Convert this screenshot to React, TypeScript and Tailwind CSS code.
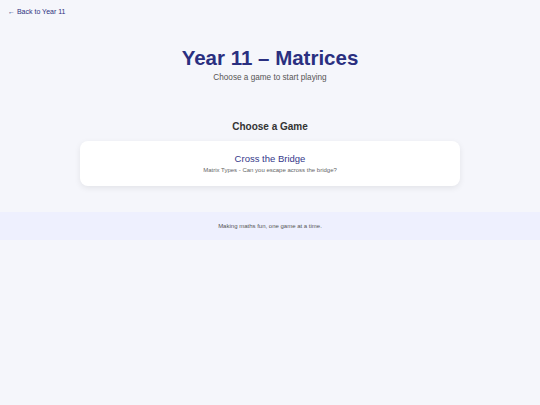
import React from "react";

interface Game {
    title: string;
    description: string;
}

const games: Game[] = [
    {
        title: "Cross the Bridge",
        description: "Matrix Types - Can you escape across the bridge?",
    },
];

export default function App() {
    return (
        <div
            className="min-h-[405px] bg-[#f5f6fb] text-[#333]"
            style={{ fontFamily: '"Liberation Sans", Arial, sans-serif' }}
        >
            <div className="px-2 pt-[7px]">
                <a href="#" className="block text-[7px] leading-[10px] text-[#2e3180]">
                    ← Back to Year 11
                </a>
            </div>

            <header className="mt-[29px] flex flex-col items-center">
                <h1 className="text-[20.5px] font-bold leading-[24px] text-[#2a2f80]">
                    Year 11 – Matrices
                </h1>
                <p className="mt-[3px] text-[8.2px] leading-[10px] text-[#555]">
                    Choose a game to start playing
                </p>
            </header>

            <main className="mt-[38px] flex flex-col items-center">
                <h2 className="text-[10px] font-bold leading-[12px] text-[#333]">
                    Choose a Game
                </h2>
                <div className="mt-[8px] flex w-[380px] flex-col gap-3">
                    {games.map((game) => (
                        <a
                            key={game.title}
                            href="#"
                            className="flex h-[45px] flex-col items-center justify-center rounded-lg bg-white shadow-[0_2px_6px_rgba(0,0,0,0.08)]"
                        >
                            <span className="text-[9.5px] leading-[12px] text-[#34388a]">
                                {game.title}
                            </span>
                            <span className="mt-[1px] text-[6px] leading-[8px] text-[#666]">
                                {game.description}
                            </span>
                        </a>
                    ))}
                </div>
            </main>

            <footer className="mt-[26px] flex h-[28px] items-center justify-center bg-[#eef0fe]">
                <p className="text-[6px] leading-[8px] text-[#555]">
                    Making maths fun, one game at a time.
                </p>
            </footer>
        </div>
    );
}
